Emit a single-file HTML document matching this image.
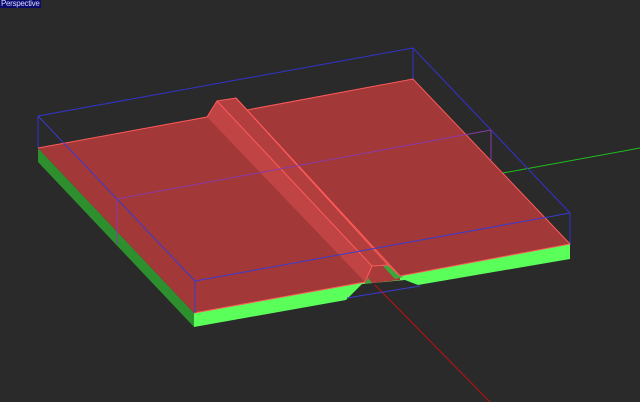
<!DOCTYPE html>
<html><head><style>
html,body{margin:0;padding:0;background:#2a2a2a;}
body{width:640px;height:402px;overflow:hidden;position:relative;}
.lbl{position:absolute;left:0;top:0;width:40px;height:8px;background:#0b0b6e;color:#d8d8ff;font:8px/8px "Liberation Sans",sans-serif;padding-left:1px;letter-spacing:-0.3px;}
</style></head><body>
<svg width="640" height="402" style="position:absolute;left:0;top:0">
<line x1="503" y1="173" x2="640" y2="148" stroke="#1fbf1f" stroke-width="1"/>
<line x1="375" y1="285" x2="490" y2="402" stroke="#c01010" stroke-width="1"/>
<line x1="38" y1="116" x2="413" y2="48" stroke="#3333cc"/>
<line x1="413" y1="48" x2="413" y2="79" stroke="#3333cc"/>
<line x1="413" y1="48" x2="570" y2="213" stroke="#3333cc"/>
<line x1="570" y1="213" x2="570" y2="245" stroke="#3333cc"/>
<line x1="38" y1="116" x2="38" y2="148" stroke="#3333cc"/>
<polygon points="38,148 194,313 194,327 38,162" fill="#2e8f2e"/>
<polygon points="194,313 365,282 400,276 570,244 570,259 418,285 405,280 362,284 346,300 194,327" fill="#5aff5a"/>
<!-- notch fill -->
<polygon points="365,282 372,266 388,265 400,276 400,280 365,284" fill="#a83a3a"/>
<polygon points="383,266 391,265 403,277 395,279" fill="#3aa83a"/>
<polygon points="365,284 368,278 372,283" fill="#3aa83a"/>
<polygon points="38,148 207,117 247,110 413,79 570,244 400,276 388,265 372,266 365,282 194,313" fill="#a33838"/>
<polygon points="207,117 217,101 372,266 365,282" fill="#c04444"/>
<polygon points="217,101 236,98 388,265 372,266" fill="#b23e3e"/>
<polygon points="236,98 247,110 400,276 388,265" fill="#a83a3a"/>
<g stroke="#ff5a5a" stroke-width="1" fill="none">
<polyline points="38,148 207,117 217,101 236,98 247,110 413,79 570,244"/>
<line x1="236" y1="98" x2="388" y2="265"/>
<line x1="247" y1="110" x2="400" y2="276"/>
<line x1="217" y1="101" x2="372" y2="266"/>
<polyline points="194,313 365,282 372,266 388,265 400,276 570,244"/>
</g>
<line x1="117" y1="199" x2="491" y2="130" stroke="#8a3aa8"/>
<line x1="491" y1="130" x2="491" y2="160" stroke="#8a3aa8"/>
<line x1="117" y1="199" x2="117" y2="244" stroke="#8a3aa8"/>
<line x1="38" y1="116" x2="195" y2="281" stroke="#3b3bd0"/>
<line x1="195" y1="281" x2="570" y2="213" stroke="#3b3bd0"/>
<line x1="195" y1="281" x2="195" y2="313" stroke="#3b3bd0"/>
<line x1="347" y1="298" x2="420" y2="286" stroke="#3b3bd0"/>
</svg>
<div class="lbl">Perspective</div>
</body></html>
